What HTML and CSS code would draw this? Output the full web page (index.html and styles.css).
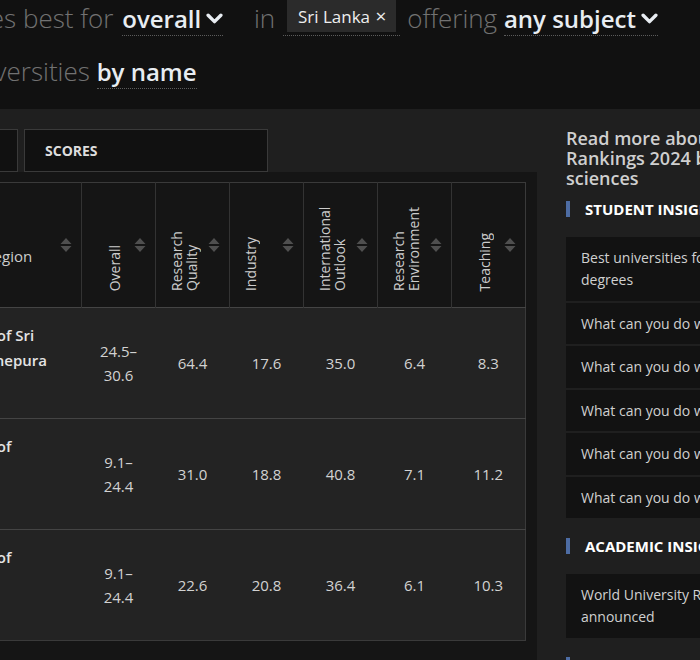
FILE: index.html
```
<!DOCTYPE html>
<html lang="en">
<head>
    <meta charset="UTF-8">
    <meta name="viewport" content="width=device-width, initial-scale=1.0">
    <title>University Rankings - Sri Lanka</title>
    <link rel="stylesheet" href="styles.css">
</head>
<body>
    <header class="finder">
        <div class="finder-line line-one">
            Universities best for <span class="pick pick-first">overall<svg class="chev" viewBox="0 0 16 11"><path d="M2 2 L8 8 L14 2"/></svg></span>
            <span class="word-in">in</span>
            <span class="chip-wrap"><span class="chip">Sri Lanka <span class="chip-x">&times;</span></span></span>
            offering <span class="pick">any subject<svg class="chev" viewBox="0 0 16 11"><path d="M2 2 L8 8 L14 2"/></svg></span>
        </div>
        <div class="finder-line line-two">
            Sort universities <span class="pick">by name</span>
        </div>
    </header>

    <div class="layout">
        <section class="rankings">
            <div class="tabs">
                <div class="tab">Rankings</div>
                <div class="tab">Scores</div>
            </div>

            <div class="table-wrap">
                <table class="scores">
                    <colgroup>
                        <col class="col-rank">
                        <col class="col-name">
                        <col class="col-score">
                        <col class="col-score">
                        <col class="col-score">
                        <col class="col-score">
                        <col class="col-score">
                        <col class="col-score">
                    </colgroup>
                    <thead>
                        <tr>
                            <th class="rank-head">Rank</th>
                            <th class="name-head">
                                <div class="name-inner">
                                    <span>Name<br>Country/Region</span>
                                    <svg class="sort" viewBox="0 0 12 16"><path d="M6 1 L11.5 7 H0.5 Z M0.5 9 H11.5 L6 15 Z"/></svg>
                                </div>
                            </th>
                            <th>
                                <div class="th-inner">
                                    <span class="th-label label-wide">Overall</span>
                                    <svg class="sort" viewBox="0 0 12 16"><path d="M6 1 L11.5 7 H0.5 Z M0.5 9 H11.5 L6 15 Z"/></svg>
                                </div>
                            </th>
                            <th>
                                <div class="th-inner">
                                    <span class="th-label">Research Quality</span>
                                    <svg class="sort" viewBox="0 0 12 16"><path d="M6 1 L11.5 7 H0.5 Z M0.5 9 H11.5 L6 15 Z"/></svg>
                                </div>
                            </th>
                            <th>
                                <div class="th-inner">
                                    <span class="th-label">Industry</span>
                                    <svg class="sort" viewBox="0 0 12 16"><path d="M6 1 L11.5 7 H0.5 Z M0.5 9 H11.5 L6 15 Z"/></svg>
                                </div>
                            </th>
                            <th>
                                <div class="th-inner">
                                    <span class="th-label">International Outlook</span>
                                    <svg class="sort" viewBox="0 0 12 16"><path d="M6 1 L11.5 7 H0.5 Z M0.5 9 H11.5 L6 15 Z"/></svg>
                                </div>
                            </th>
                            <th>
                                <div class="th-inner">
                                    <span class="th-label">Research Environment</span>
                                    <svg class="sort" viewBox="0 0 12 16"><path d="M6 1 L11.5 7 H0.5 Z M0.5 9 H11.5 L6 15 Z"/></svg>
                                </div>
                            </th>
                            <th>
                                <div class="th-inner">
                                    <span class="th-label label-wide">Teaching</span>
                                    <svg class="sort" viewBox="0 0 12 16"><path d="M6 1 L11.5 7 H0.5 Z M0.5 9 H11.5 L6 15 Z"/></svg>
                                </div>
                            </th>
                        </tr>
                    </thead>
                    <tbody>
                        <tr>
                            <td class="rank">801–1000</td>
                            <td class="name">
                                <a class="uni" href="#">University of Sri Jayewardenepura</a>
                                <div class="country">Sri Lanka</div>
                            </td>
                            <td>24.5–30.6</td>
                            <td>64.4</td>
                            <td>17.6</td>
                            <td>35.0</td>
                            <td>6.4</td>
                            <td>8.3</td>
                        </tr>
                        <tr>
                            <td class="rank">1201–1500</td>
                            <td class="name">
                                <a class="uni" href="#">University of Colombo</a>
                                <div class="country">Sri Lanka</div>
                            </td>
                            <td>9.1–24.4</td>
                            <td>31.0</td>
                            <td>18.8</td>
                            <td>40.8</td>
                            <td>7.1</td>
                            <td>11.2</td>
                        </tr>
                        <tr>
                            <td class="rank">1201–1500</td>
                            <td class="name">
                                <a class="uni" href="#">University of Moratuwa</a>
                                <div class="country">Sri Lanka</div>
                            </td>
                            <td>9.1–24.4</td>
                            <td>22.6</td>
                            <td>20.8</td>
                            <td>36.4</td>
                            <td>6.1</td>
                            <td>10.3</td>
                        </tr>
                    </tbody>
                </table>
            </div>
        </section>

        <aside class="sidebar">
            <h3 class="sidebar-title">Read more about the World University Rankings 2024 by subject: physical sciences</h3>

            <h4 class="section-head">Student insights</h4>
            <ul class="insights">
                <li>Best universities for physical sciences degrees</li>
                <li>What can you do with a physics degree?</li>
                <li>What can you do with a chemistry degree?</li>
                <li>What can you do with a maths degree?</li>
                <li>What can you do with a geology degree?</li>
                <li>What can you do with a geography degree?</li>
            </ul>

            <h4 class="section-head">Academic insights</h4>
            <ul class="insights">
                <li>World University Rankings 2024 by subject announced</li>
            </ul>

            <h4 class="section-head">Latest news</h4>
        </aside>
    </div>
</body>
</html>
```

FILE: styles.css
```
body {
    margin: 0;
    background-color: #1f1f1f;
    font-family: "Open Sans", "Liberation Sans", sans-serif;
    color: #ccc;
    overflow: hidden;
}

/* sentence style filter bar */
.finder {
    background: #111;
    height: 109px;
    overflow: hidden;
    white-space: nowrap;
    font-size: 26px;
    line-height: 53px;
    font-weight: 300;
    color: #727272;
}
.line-one {
    margin-top: -8px;
    margin-left: -119px;
}
.line-two {
    margin-left: -97px;
}
.pick {
    color: #e8edf2;
    font-size: 24px;
    font-weight: 600;
    border-bottom: 1px dotted #5c5c5c;
}
.pick-first {
    margin-left: 2px;
}
.chev {
    width: 17px;
    height: 12px;
    margin-left: 5px;
    vertical-align: 3px;
}
.chev path {
    fill: none;
    stroke: #e8edf2;
    stroke-width: 3.2;
    stroke-linecap: round;
    stroke-linejoin: round;
}
.word-in {
    margin: 0 1px 0 24px;
}
.chip-wrap {
    display: inline-block;
    padding: 0 4px 2px;
    border-bottom: 1px dotted #5c5c5c;
    font-size: 17px;
    line-height: 32px;
    font-weight: 400;
    vertical-align: 5px;
}
.chip {
    display: inline-block;
    height: 32px;
    padding: 0 10px 0 11px;
    background: #2b2b2b;
    color: #eee;
}
.chip-x {
    font-size: 19px;
    margin-left: 1px;
}

.layout {
    display: flex;
    align-items: flex-start;
    margin-left: -251px;
}

/* ranking table */
.rankings {
    flex: none;
    width: 788px;
    padding-top: 20px;
}
.tabs {
    display: flex;
    gap: 6px;
    padding-left: 25px;
}
.tab {
    width: 244px;
    height: 43px;
    box-sizing: border-box;
    display: flex;
    align-items: center;
    padding-left: 20px;
    border: 1px solid #3a3a3a;
    background: #111;
    color: #ddd;
    font-size: 14px;
    font-weight: 700;
    text-transform: uppercase;
}
.table-wrap {
    background: #151515;
    padding: 10px 12px 40px 10px;
}
.scores {
    width: 766px;
    table-layout: fixed;
    border-collapse: collapse;
    border: 1px solid #3a3a3a;
}
.col-rank {
    width: 150px;
}
.col-name {
    width: 172px;
}
.col-score {
    width: 74px;
}
.scores th {
    height: 92px;
    padding: 16px 9px 16px 13px;
    background: #151515;
    border-left: 1px solid #333;
    font-weight: 400;
    font-size: 15px;
    color: #ccc;
    text-align: left;
}
.th-inner {
    display: flex;
    align-items: center;
    height: 92px;
}
.th-label {
    align-self: flex-end;
    writing-mode: vertical-rl;
    transform: rotate(180deg);
    font-size: 14px;
    line-height: 15px;
    text-align: start;
    color: #ccc;
}
.label-wide {
    margin-left: 12px;
}
.sort {
    flex: none;
    width: 12px;
    height: 16px;
    margin-left: auto;
}
.sort path {
    fill: #4f4f4f;
}
.name-head,
.scores .rank-head {
    padding-left: 10px;
}
.name-inner {
    display: flex;
    align-items: center;
    line-height: 23px;
}
.scores td {
    height: 110px;
    padding: 0 8px;
    background: #232323;
    border-top: 1px solid #444;
    text-align: center;
    vertical-align: middle;
    font-size: 15px;
    line-height: 24px;
    color: #d2d2d2;
}
.scores td.name,
.scores td.rank {
    height: 105px;
    text-align: left;
    padding: 0 10px 5px;
}
.uni {
    display: block;
    color: #e4e4e4;
    font-weight: 600;
    line-height: 25px;
    text-decoration: none;
}
.country {
    font-size: 14px;
    line-height: 25px;
    color: #999;
}

/* right column */
.sidebar {
    flex: none;
    width: 320px;
    margin-left: 29px;
    padding-top: 19px;
}
.sidebar-title {
    width: 340px;
    margin: 0;
    font-size: 18px;
    line-height: 20px;
    font-weight: 600;
    color: #cfcfcf;
}
.section-head {
    display: flex;
    align-items: center;
    height: 17px;
    margin: 19px 0 20px;
    font-size: 15px;
    font-weight: 700;
    color: #fff;
    text-transform: uppercase;
}
.section-head::before {
    content: "";
    width: 4px;
    height: 16px;
    margin-right: 15px;
    background: #4d6ca3;
}
.sidebar-title + .section-head {
    margin-top: 12px;
}
.insights {
    list-style: none;
    margin: 0;
    padding: 0;
    display: flex;
    flex-direction: column;
    gap: 2px;
}
.insights li {
    padding: 10px 15px 9.5px;
    background: #121212;
    font-size: 14px;
    line-height: 22px;
    color: #d0d0d0;
}
```
